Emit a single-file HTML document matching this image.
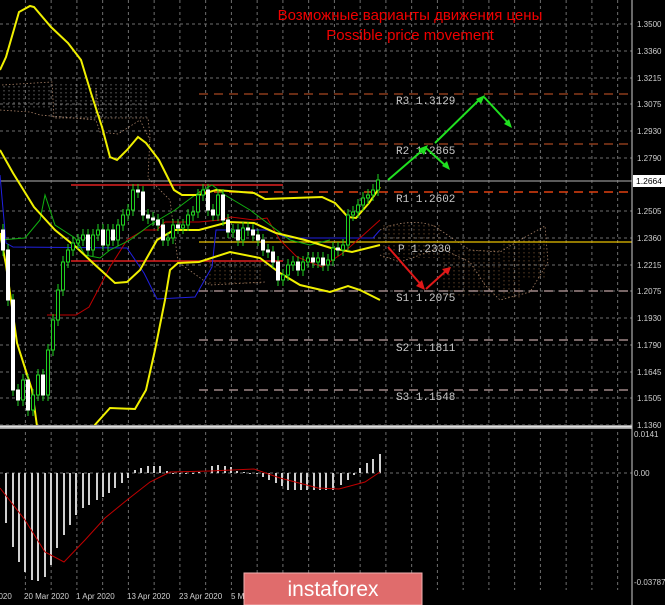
<!DOCTYPE html>
<html><head><meta charset="utf-8"><style>
html,body{margin:0;padding:0;background:#000;overflow:hidden}
svg{display:block}
</style></head><body>
<svg id="s" width="665" height="605" viewBox="0 0 665 605" xmlns="http://www.w3.org/2000/svg" font-family="Liberation Sans, sans-serif">
<rect width="665" height="605" fill="#000"/>
<g id="grid" stroke="#8a8a8a" stroke-width="1" stroke-dasharray="3,3" opacity="0.8"></g>
<g stroke="#d0a080" stroke-width="0.8" stroke-dasharray="1.5,2" fill="none" opacity="0.8">
<path d="M2,85 L52,82 L54,118 L96,118 L96,88 L100,118 L148,118 L150,136 L148,178 L170,200 L178,262 L210,285 L265,282"/>
<path d="M0,110 L30,112 L40,115 L96,120 L100,132 L118,134 L140,120 L150,140"/>
<path d="M380,230 C400,220 430,220 440,230 L470,250 L500,252 L520,240 L545,226 L548,262 L530,292 L500,300 L485,285 L470,262 L440,248 L400,262 L380,255"/>
</g>
<g id="cloudfill" stroke-width="0.8" stroke-dasharray="1.5,2.5" opacity="0.6"></g>
<g stroke-width="1.5" stroke-dasharray="9,6" fill="none">
<line x1="199" y1="94" x2="632" y2="94" stroke="#8b3a1a"/>
<line x1="199" y1="144" x2="632" y2="144" stroke="#8b3a1a"/>
<line x1="199" y1="192" x2="632" y2="192" stroke="#e04010"/>
<line x1="199" y1="291" x2="632" y2="291" stroke="#a08888"/>
<line x1="199" y1="340" x2="632" y2="340" stroke="#a08888"/>
<line x1="199" y1="390" x2="632" y2="390" stroke="#a08888"/>
</g>
<line x1="199" y1="242" x2="632" y2="242" stroke="#e8c000" stroke-width="1.2"/>
<line x1="0" y1="181" x2="632" y2="181" stroke="#909090" stroke-width="1.2"/>
<line x1="71" y1="185" x2="283" y2="185" stroke="#e02020" stroke-width="1.5"/>
<line x1="71" y1="261" x2="283" y2="261" stroke="#e02020" stroke-width="1.5"/>
<g font-family="Liberation Mono, monospace" font-size="11" fill="#c8c8c8">
<text x="396" y="104">R3 1.3129</text>
<text x="396" y="154">R2 1.2865</text>
<text x="396" y="202">R1 1.2602</text>
<text x="398" y="252">P 1.2330</text>
<text x="396" y="301">S1 1.2075</text>
<text x="396" y="351">S2 1.1811</text>
<text x="396" y="400">S3 1.1548</text>
</g>
<polyline fill="none" stroke="#2020e0" stroke-width="1" points="0,175 6,243 13,247 127,248 144,273 157,299 195,297 212,267 216,230 267,230 288,238 373,238 380,230"/>
<polyline fill="none" stroke="#c00000" stroke-width="1" points="47,315 76,315 89,307 98,290 110,267 127,240 144,230 157,230 165,222 199,222 220,220 231,217 254,220 267,218 280,240 297,257 322,267 343,253 360,238 380,220"/>
<polyline fill="none" stroke="#10b010" stroke-width="1" points="0,240 25,238 40,220 45,195 55,225 75,238 85,255 100,258 110,250 130,240 150,225 175,210 195,195 212,185 225,195 250,210 270,225 290,240 310,245 330,240"/>
<g fill="none" stroke="#f0f000" stroke-width="2">
<polyline points="0,70 6,57 19,12 30,6 34,7 51,27 68,43 81,60 91,93 102,127 110,157 117,160 127,150 138,137 146,143 159,160 174,190 182,195 199,195 216,190 254,193 265,199 322,197 335,203 348,217 356,218 369,203 380,187"/>
<polyline points="0,150 13,173 34,207 55,230 76,247 93,263 115,283 127,282 140,270 157,240 174,230 199,230 229,222 254,223 276,233 305,240 331,248 352,252 380,245"/>
<polyline points="0,233 6,265 11,300 17,343 32,390 37,426"/>
<polyline points="93,427 110,408 135,409 146,390 155,350 165,300 170,270 178,263 199,262 230,252 260,258 280,273 300,285 330,292 348,286 360,290 380,300"/>
</g>
<g id="candles"></g>
<g stroke="#20e020" stroke-width="2" fill="none">
<line x1="388" y1="180" x2="424" y2="149"/><line x1="426" y1="148" x2="447" y2="167"/>
<line x1="435" y1="143" x2="481" y2="98"/><line x1="484" y1="97" x2="510" y2="125"/>
</g>
<g fill="#20e020">
<polygon points="428,145 418,149 424,155"/><polygon points="450,170 442,166 447,161"/>
<polygon points="485,95 476,99 481,104"/><polygon points="512,128 504,124 509,119"/>
</g>
<g stroke="#e01818" stroke-width="2" fill="none"><line x1="388" y1="247" x2="423" y2="287"/><line x1="426" y1="289" x2="447" y2="270"/></g>
<g fill="#e01818"><polygon points="425,290 416,286 422,280"/><polygon points="451,267 442,269 448,275"/></g>
<text x="410" y="20" text-anchor="middle" font-size="15" fill="#f00000">Возможные варианты движения цены</text>
<text x="410" y="40" text-anchor="middle" font-size="15" fill="#f00000">Possible price movement</text>
<rect x="0" y="425" width="632" height="4" fill="#9a9a9a"/><rect x="0" y="426" width="632" height="1.5" fill="#e0e0e0"/>
<g id="macd" stroke="#d0d0d0" stroke-width="2"></g>
<polyline fill="none" stroke="#c00000" stroke-width="1" points="0,488 25,520 45,552 64,562 85,540 105,518 127,500 150,482 170,472 210,471 254,469 280,478 318,488 339,489 365,482 380,472"/>
<line x1="632" y1="0" x2="632" y2="605" stroke="#d0d0d0" stroke-width="1"/>
<g font-size="8" fill="#d0d0d0" id="ax"></g>
<rect x="633" y="175" width="32" height="12" fill="#fff"/><text x="636" y="184" font-size="8.5" fill="#000">1.2664</text>
<g font-size="8" fill="#d0d0d0">
<text x="-6" y="599">2020</text><text x="24" y="599">20 Mar 2020</text><text x="76" y="599">1 Apr 2020</text><text x="127" y="599">13 Apr 2020</text><text x="179" y="599">23 Apr 2020</text><text x="231" y="599">5 M</text>
</g>
<rect x="244" y="573" width="178" height="32" fill="#e06c6c" stroke="#f0b0b0" stroke-width="1"/>
<text x="333" y="596" text-anchor="middle" font-size="21" fill="#fff">instaforex</text>
</svg>
<script>
var NS="http://www.w3.org/2000/svg";
function el(p,t,a){var e=document.createElementNS(NS,t);for(var k in a)e.setAttribute(k,a[k]);p.appendChild(e);return e;}
var g=document.getElementById('grid');
for(var x=25.4;x<632;x+=25.75)el(g,'line',{x1:x,y1:0,x2:x,y2:590});
var ys=[24,51,78,104,131,158,211,238,265,291,318,345,372,398,425];
var ax=document.getElementById('ax');
var labs=["1.3500","1.3360","1.3215","1.3075","1.2930","1.2790","1.2505","1.2360","1.2215","1.2075","1.1930","1.1790","1.1645","1.1505","1.1360"];
ys.forEach(function(y,i){el(g,'line',{x1:0,y1:y,x2:632,y2:y});var t=el(ax,'text',{x:637,y:y+3});t.textContent=labs[i];});
el(g,'line',{x1:0,y1:473,x2:632,y2:473});
[["0.0141",437],["0.00",476],["-0.03787",585]].forEach(function(a){var t=el(ax,'text',{x:634,y:a[1]});t.textContent=a[0];});
var cl=[250,300,390,400,380,410,395,375,395,350,320,290,262,250,243,240,235,250,235,230,245,230,240,225,215,210,190,192,215,218,220,225,240,238,225,228,225,215,212,195,190,210,215,195,220,232,230,240,228,230,235,240,250,252,262,280,275,265,262,270,262,258,262,258,265,260,248,250,245,215,212,205,198,195,190,180];
var c=document.getElementById('candles');var prev=230;
cl.forEach(function(y,i){var x=3+i*5;var o=prev;prev=y;var top=Math.min(o,y),bot=Math.max(o,y);
var bull=y<o;
el(c,'line',{x1:x,y1:top-6,x2:x,y2:bot+6,stroke:'#20d020','stroke-width':1});
el(c,'rect',{x:x-1.5,y:top,width:3,height:Math.max(bot-top,1),fill:bull?'#000':'#fff',stroke:bull?'#20d020':'#fff','stroke-width':1});});
var m=[[6,523],[13,547],[19,562],[25,572],[32,580],[38,581],[45,577],[51,565],[57,548],[64,535],[70,525],[76,515],[83,508],[89,505],[97,500],[103,497],[109,493],[115,488],[122,483],[128,478],[135,470],[141,468],[148,466],[154,466],[160,466],[167,471],[173,474],[180,474],[186,474],[193,474],[199,472],[206,473],[212,466],[218,465],[225,466],[231,467],[237,471],[244,472],[250,474],[257,474],[263,477],[269,480],[276,483],[282,486],[288,490],[295,490],[301,490],[307,490],[314,490],[320,490],[326,490],[333,490],[341,485],[348,480],[354,475],[360,468],[367,463],[373,459],[380,454]];
var mg=document.getElementById('macd');
m.forEach(function(p){el(mg,'line',{x1:p[0],y1:473,x2:p[0],y2:p[1]});});
var cf=document.getElementById('cloudfill');
for(var x=4;x<52;x+=5)el(cf,'line',{x1:x,y1:86,x2:x,y2:110,stroke:'#d8d8d8'});
for(var x=56;x<148;x+=5)el(cf,'line',{x1:x,y1:84,x2:x,y2:118,stroke:'#d8d8d8'});
for(var x=210;x<262;x+=5)el(cf,'line',{x1:x,y1:262,x2:x,y2:284,stroke:'#c08850'});
for(var x=384;x<545;x+=5){var t=x<440?225:(x<500?250:240);var b=x<440?258:(x<520?298:280);el(cf,'line',{x1:x,y1:t,x2:x,y2:b,stroke:'#c08850'});}
</script>
</body></html>
